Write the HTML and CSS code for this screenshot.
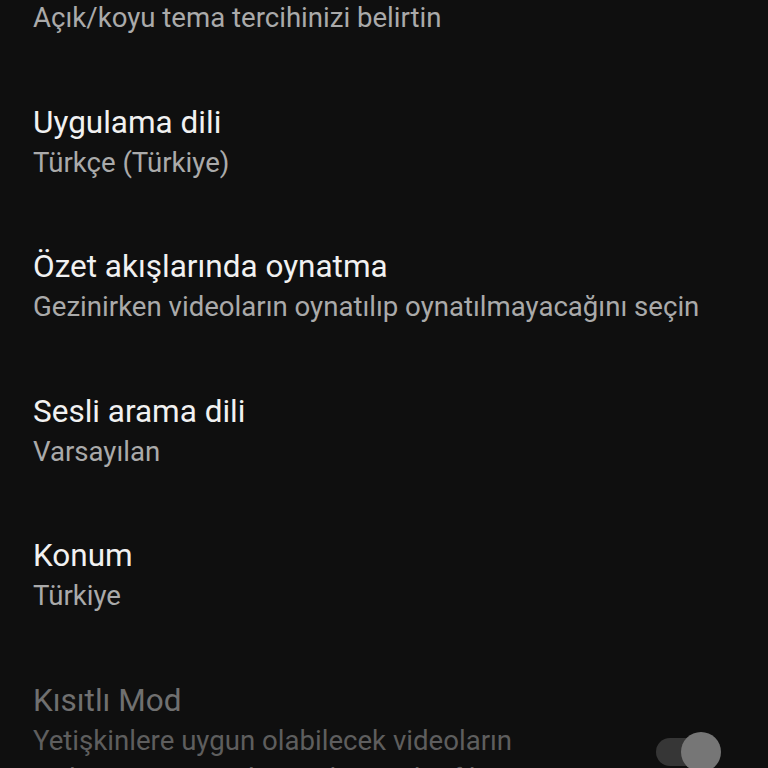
FILE: index.html
```html
<!DOCTYPE html>
<html lang="tr">
<head>
<meta charset="utf-8">
<title>Ayarlar</title>
<link rel="stylesheet" href="styles.css">
</head>
<body>
<div class="screen">
  <ul class="list">
    <li class="item">
      <div class="text">
        <div class="title">Görünüm</div>
        <div class="sub">Açık/koyu tema tercihinizi belirtin</div>
      </div>
    </li>
    <li class="item">
      <div class="text">
        <div class="title">Uygulama dili</div>
        <div class="sub">Türkçe (Türkiye)</div>
      </div>
    </li>
    <li class="item">
      <div class="text">
        <div class="title">Özet akışlarında oynatma</div>
        <div class="sub">Gezinirken videoların oynatılıp oynatılmayacağını seçin</div>
      </div>
    </li>
    <li class="item">
      <div class="text">
        <div class="title">Sesli arama dili</div>
        <div class="sub">Varsayılan</div>
      </div>
    </li>
    <li class="item">
      <div class="text">
        <div class="title">Konum</div>
        <div class="sub">Türkiye</div>
      </div>
    </li>
    <li class="item disabled">
      <div class="text narrow">
        <div class="title">Kısıtlı Mod</div>
        <div class="sub">Yetişkinlere uygun olabilecek videoların gizlenmesine yardımcı olur. Hiçbir filtre %100 doğru değildir.</div>
      </div>
      <div class="switch"><span class="thumb"></span></div>
    </li>
  </ul>
</div>
</body>
</html>
```
FILE: styles.css
```css
html, body {
  margin: 0;
  padding: 0;
  background: #0f0f0f;
}
body {
  font-family: Roboto, "Noto Sans", "Liberation Sans", sans-serif;
  -webkit-font-smoothing: antialiased;
}
.screen {
  width: 768px;
  height: 768px;
  overflow: hidden;
  background: #0f0f0f;
}
.list {
  list-style: none;
  margin: -78.5px 0 0 0;
  padding: 0;
}
.item {
  display: flex;
  align-items: flex-start;
  padding: 31.55px 54px 31.55px 33px;
}
.text {
  flex: 1;
  min-width: 0;
}
.text.narrow {
  flex: 0 0 540px;
}
.title {
  font-size: 31.5px;
  line-height: 49.4px;
  color: #f1f1f1;
}
.sub {
  font-size: 27.6px;
  line-height: 32px;
  color: #aaaaaa;
}
.item.disabled {
  padding-top: 34.55px;
}
.disabled .title {
  line-height: 43.4px;
  color: #707070;
}
.disabled .sub {
  line-height: 38px;
  color: #5e5e5e;
}
.switch {
  position: relative;
  margin-left: auto;
  margin-top: 59.45px;
  width: 58px;
  height: 28px;
  border-radius: 14px;
  background: #363636;
}
.thumb {
  position: absolute;
  right: -7px;
  top: -6px;
  width: 40px;
  height: 40px;
  border-radius: 50%;
  background: #767676;
}
```
